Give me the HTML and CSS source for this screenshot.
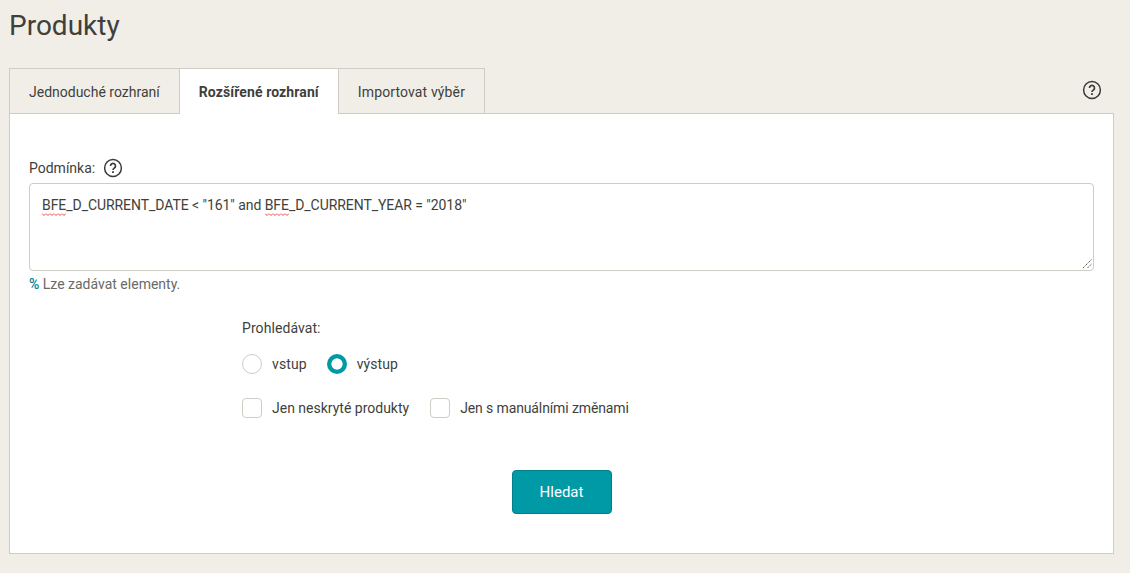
FILE: index.html
```html
<!DOCTYPE html>
<html lang="cs">
<head>
<meta charset="utf-8">
<title>Produkty</title>
<link rel="stylesheet" href="styles.css">
</head>
<body>
<h1 class="title">Produkty</h1>
<div class="tabbar">
  <div class="tabs">
    <div class="tab">Jednoduché rozhraní</div>
    <div class="tab active">Rozšířené rozhraní</div>
    <div class="tab">Importovat výběr</div>
  </div>
  <svg class="help help-top" width="20" height="20" viewBox="0 0 20 20"><circle cx="10" cy="10" r="8.4" fill="none" stroke="#3a3a36" stroke-width="1.5"/><path d="M7.5 8a2.5 2.5 0 1 1 3.8 2.1c-.9.6-1.3 1-1.3 1.9" fill="none" stroke="#3a3a36" stroke-width="1.7"/><rect x="9.1" y="13.2" width="1.8" height="1.8" fill="#3a3a36"/></svg>
</div>
<main class="panel">
  <div class="label-row">
    <label class="label">Podmínka:</label>
    <svg class="help" width="20" height="20" viewBox="0 0 20 20"><circle cx="10" cy="10" r="8.4" fill="none" stroke="#3a3a36" stroke-width="1.5"/><path d="M7.5 8a2.5 2.5 0 1 1 3.8 2.1c-.9.6-1.3 1-1.3 1.9" fill="none" stroke="#3a3a36" stroke-width="1.7"/><rect x="9.1" y="13.2" width="1.8" height="1.8" fill="#3a3a36"/></svg>
  </div>
  <div class="textarea"><span class="sp">BFE</span>_D_CURRENT_DATE &lt; "161" and <span class="sp">BFE</span>_D_CURRENT_YEAR = "2018"<svg class="grip" width="10" height="10" viewBox="0 0 10 10"><path d="M9.5 .5L.5 9.5M9.5 5L5 9.5" stroke="#555" stroke-width="1" stroke-dasharray="1.4 .7"/></svg></div>
  <p class="hint"><span class="pct">%</span> Lze zadávat elementy.</p>
  <div class="options">
    <div class="opt-title">Prohledávat:</div>
    <div class="opt-row radios">
      <span class="item"><i class="radio"></i>vstup</span>
      <span class="item"><i class="radio on"></i>výstup</span>
    </div>
    <div class="opt-row checks">
      <span class="item"><i class="check"></i>Jen neskryté produkty</span>
      <span class="item narrow"><i class="check"></i>Jen s manuálními změnami</span>
    </div>
  </div>
  <div class="actions"><button class="btn">Hledat</button></div>
</main>
</body>
</html>
```
FILE: styles.css
```css
* { box-sizing: border-box; }
html, body { margin: 0; padding: 0; }
body { background: #f1eee8; font-family: Roboto, sans-serif; font-size: 14px; color: #403f3b; height: 573px; overflow: hidden; padding: 0 16px 0 9px; }
.title { margin: 0; padding-top: 10px; height: 68px; font-size: 28px; line-height: 32px; font-weight: 400; color: #403f3b; }
.tabbar { display: flex; justify-content: space-between; height: 46px; position: relative; }
.tabs { display: flex; }
.tab { height: 46px; padding: 0 19px; line-height: 47px; border: 1px solid #cfccc6; border-right: 0; background: #f1eee8; }
.tab:last-child { border-right: 1px solid #cfccc6; }
.tab:nth-child(3) { letter-spacing: .13px; }
.tab.active { background: #fff; font-weight: 700; letter-spacing: .11px; border-bottom: 0; position: relative; z-index: 1; }
.help { display: block; }
.help-top { margin: 12px 12px 0 0; }
.panel { margin-top: -1px; height: 441px; background: #fff; border: 1px solid #cfccc6; padding: 44px 19px 0; }
.label-row { display: flex; align-items: center; gap: 8px; height: 20px; }
.textarea { position: relative; margin-top: 5px; height: 88px; border: 1px solid #cfccc6; border-radius: 4px; padding: 12px; line-height: 18px; letter-spacing: -.06px; }
.sp { padding-bottom: 3px; background: url("data:image/svg+xml,%3Csvg xmlns='http://www.w3.org/2000/svg' width='4' height='3'%3E%3Cpath d='M0 .5L2 2.5L4 .5' fill='none' stroke='%23e33' stroke-width='.9'/%3E%3C/svg%3E") repeat-x left bottom / 4px 3px; }
.grip { position: absolute; right: 1px; bottom: 1px; }
.hint { margin: 5px 0 0; line-height: 16px; font-size: 14px; color: #6a6a66; }
.pct { color: #00838f; font-weight: 500; }
.options { margin: 26px 0 0 213px; }
.opt-title { line-height: 20px; letter-spacing: .08px; }
.opt-row { display: flex; gap: 20px; align-items: center; height: 20px; }
.radios { margin-top: 16px; letter-spacing: .1px; }
.checks { margin-top: 24px; gap: 21px; }
.item { display: flex; align-items: center; gap: 10px; }
.narrow { letter-spacing: -.12px; }
.radio, .check { display: block; width: 20px; height: 20px; background: #fff; border: 1px solid #cfccc6; }
.radio { border-radius: 50%; }
.radio.on { border: 0; background: radial-gradient(circle, #fff 5.3px, #009aa6 5.9px); }
.check { border-radius: 4px; }
.actions { display: flex; justify-content: center; margin-top: 52px; }
.btn { width: 100px; height: 44px; border: 1px solid #00808c; border-radius: 4px; background: #009aa6; color: #fff; font: 400 15px Roboto, sans-serif; }
```
